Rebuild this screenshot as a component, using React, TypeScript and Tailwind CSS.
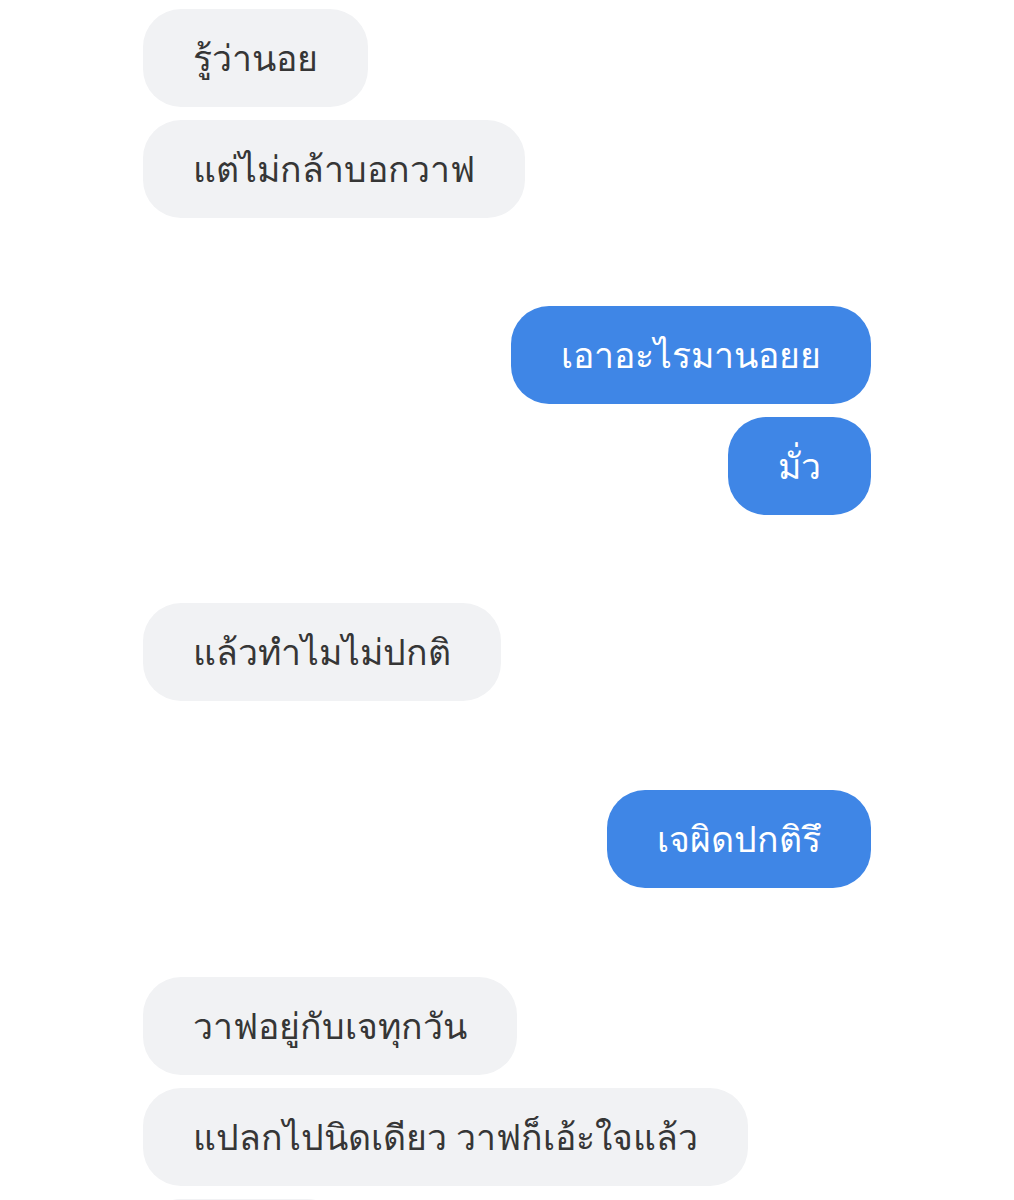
import React from 'react'

type Msg = { text: string; me?: boolean }

// กลุ่มข้อความตามลำดับ — กลุ่มที่ติดกันใช้ gap 13px, ระหว่างกลุ่ม ~88px
const groups: { gap: string; msgs: Msg[] }[] = [
  { gap: '', msgs: [{ text: 'รู้ว่านอย' }, { text: 'แต่ไม่กล้าบอกวาฟ' }] },
  { gap: 'mt-[88px]', msgs: [{ text: 'เอาอะไรมานอยย', me: true }, { text: 'มั่ว', me: true }] },
  { gap: 'mt-[88px]', msgs: [{ text: 'แล้วทำไมไม่ปกติ' }] },
  { gap: 'mt-[89px]', msgs: [{ text: 'เจผิดปกติรึ', me: true }] },
  {
    gap: 'mt-[89px]',
    msgs: [{ text: 'วาฟอยู่กับเจทุกวัน' }, { text: 'แปลกไปนิดเดียว วาฟก็เอ้ะใจแล้ว' }, { text: '\u00a0' }],
  },
]

function Bubble({ text, me }: Msg) {
  return (
    <div className={`flex ${me ? 'justify-end' : 'justify-start'}`}>
      <div
        className={`h-[98px] flex items-center px-[50px] rounded-[38px] text-[35.6px] leading-none whitespace-nowrap ${
          me ? 'bg-[#3f86e6] text-white' : 'bg-[#f1f2f4] text-[#363636]'
        } ${text === '\u00a0' ? 'w-[202px]' : ''}`}
      >
        {text}
      </div>
    </div>
  )
}

export default function App() {
  return (
    <div
      className="w-[1014px] h-[1200px] overflow-hidden bg-white"
      style={{ fontFamily: '"Noto Sans", "DejaVu Sans", sans-serif' }}
    >
      <div className="pt-[9px] pl-[143px] pr-[143px] flex flex-col">
        {groups.map((g, i) => (
          <div key={i} className={`flex flex-col gap-[13px] ${g.gap}`}>
            {g.msgs.map((m, j) => (
              <Bubble key={j} {...m} />
            ))}
          </div>
        ))}
      </div>
    </div>
  )
}
